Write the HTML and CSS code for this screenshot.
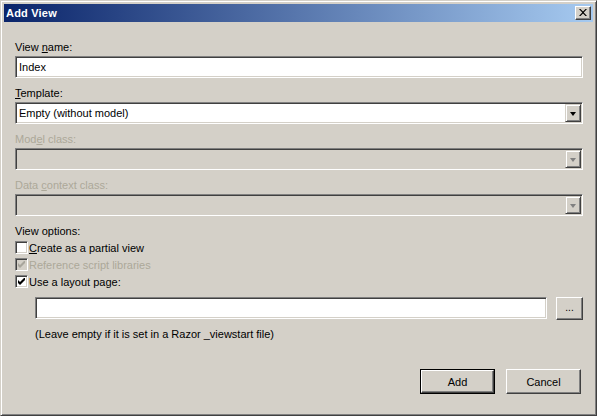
FILE: index.html
```html
<!DOCTYPE html>
<html>
<head>
<meta charset="utf-8">
<title>Add View</title>
<link rel="stylesheet" href="styles.css">
</head>
<body>
<div class="window">
  <div class="titlebar">
    <span class="title">Add View</span>
    <span class="close-btn">
      <svg width="8" height="7" viewBox="0 0 8 7"><path d="M0 0 L1.5 0 L4 2.5 L6.5 0 L8 0 L4.75 3.5 L8 7 L6.5 7 L4 4.5 L1.5 7 L0 7 L3.25 3.5 Z" fill="#000"/></svg>
    </span>
  </div>
  <div class="content">
    <div class="label">View <u>n</u>ame:</div>
    <div class="field"><span class="field-text">Index</span></div>

    <div class="label gap"><u>T</u>emplate:</div>
    <div class="field combo">
      <span class="field-text">Empty (without model)</span>
      <span class="drop-btn"><span class="arrow"></span></span>
    </div>

    <div class="label gap disabled">Mod<u>e</u>l class:</div>
    <div class="field combo is-disabled">
      <span class="field-text"></span>
      <span class="drop-btn"><span class="arrow"></span></span>
    </div>

    <div class="label gap disabled">Data <u>c</u>ontext class:</div>
    <div class="field combo is-disabled">
      <span class="field-text"></span>
      <span class="drop-btn"><span class="arrow"></span></span>
    </div>

    <div class="label gap options-label">View options:</div>
    <div class="check-row">
      <span class="checkbox"></span>
      <span class="check-text"><u>C</u>reate as a partial view</span>
    </div>
    <div class="check-row disabled">
      <span class="checkbox is-disabled">
        <svg width="7" height="7" viewBox="0 0 7 7"><path d="M0 2 L0 5 L2 7 L7 2 L7 -1 L2 4 Z" fill="#a8a59c"/></svg>
      </span>
      <span class="check-text">Reference script libraries</span>
    </div>
    <div class="check-row">
      <span class="checkbox">
        <svg width="7" height="7" viewBox="0 0 7 7"><path d="M0 2 L0 5 L2 7 L7 2 L7 -1 L2 4 Z" fill="#000"/></svg>
      </span>
      <span class="check-text">Use a layout page:</span>
    </div>

    <div class="layout-row">
      <div class="field layout-field"></div>
      <div class="button browse">...</div>
    </div>
    <div class="hint">(Leave empty if it is set in a Razor _viewstart file)</div>

    <div class="button-row">
      <div class="default-frame"><div class="button wide">Add</div></div>
      <div class="button wide">Cancel</div>
    </div>
  </div>
</div>
</body>
</html>
```
FILE: styles.css
```css
* { box-sizing: border-box; }

html, body {
  margin: 0;
  padding: 0;
  background: #ffffff;
}

body {
  font-family: "Liberation Sans", Arial, sans-serif;
  font-size: 11px;
  color: #000;
}

.window {
  width: 597px;
  height: 416px;
  background: #d4d0c8;
  border: 1px solid;
  border-color: #d4d0c8 #404040 #404040 #d4d0c8;
  box-shadow: inset 1px 1px #ffffff, inset -1px -1px #808080;
  padding: 3px 3px 2px 3px;
  display: flex;
  flex-direction: column;
}

.titlebar {
  height: 18px;
  background: linear-gradient(to right, #0a246a, #a6caf0);
  display: flex;
  align-items: center;
  justify-content: space-between;
  padding: 0 2px 0 2px;
}

.title {
  color: #ffffff;
  font-weight: bold;
  font-size: 11px;
  letter-spacing: 0.2px;
}

.close-btn {
  width: 16px;
  height: 14px;
  background: #d4d0c8;
  border: 1px solid;
  border-color: #ffffff #404040 #404040 #ffffff;
  box-shadow: inset -1px -1px #808080;
  display: flex;
  align-items: center;
  justify-content: center;
  padding-bottom: 1px;
}

.content {
  flex: 1;
  padding: 18px 10px 0 11px;
  display: flex;
  flex-direction: column;
}

.label {
  height: 14px;
  line-height: 14px;
  margin-bottom: 2px;
  white-space: nowrap;
}

.label.gap { margin-top: 8px; }
.options-label { margin-bottom: 1px; }

.disabled { color: #aca899; }

.field {
  height: 22px;
  background: #ffffff;
  border: 1px solid;
  border-color: #808080 #ffffff #ffffff #808080;
  box-shadow: inset 1px 1px #404040, inset -1px -1px #d4d0c8;
  display: flex;
  align-items: center;
  padding: 0 2px 0 3px;
}

.field-text {
  flex: 1;
  line-height: 14px;
}

.field.is-disabled { background: #d4d0c8; }

.drop-btn {
  width: 16px;
  height: 18px;
  background: #d4d0c8;
  border: 1px solid;
  border-color: #d4d0c8 #404040 #404040 #d4d0c8;
  box-shadow: inset 1px 1px #ffffff, inset -1px -1px #808080;
  display: flex;
  align-items: center;
  justify-content: center;
  margin-right: -1px;
}

.arrow {
  width: 0;
  height: 0;
  border-left: 3.5px solid transparent;
  border-right: 3.5px solid transparent;
  border-top: 4px solid #000;
  margin-top: 1px;
}

.is-disabled .arrow { border-top-color: #808080; }

.check-row {
  height: 17px;
  display: flex;
  align-items: center;
}

.checkbox {
  width: 13px;
  height: 13px;
  background: #ffffff;
  border: 1px solid;
  border-color: #808080 #ffffff #ffffff #808080;
  box-shadow: inset 1px 1px #404040, inset -1px -1px #d4d0c8;
  display: flex;
  align-items: center;
  justify-content: center;
  margin-right: 1px;
  flex: none;
}

.checkbox.is-disabled { background: #d4d0c8; }

.layout-row {
  margin-top: 7px;
  margin-left: 20px;
  display: flex;
  gap: 9px;
  align-items: flex-start;
}

.layout-field {
  width: 512px;
}

.button {
  background: #d4d0c8;
  border: 1px solid;
  border-color: #ffffff #404040 #404040 #ffffff;
  box-shadow: inset -1px -1px #808080;
  display: flex;
  align-items: center;
  justify-content: center;
}

.browse {
  width: 27px;
  height: 23px;
  font-size: 10px;
  padding-bottom: 2px;
}

.hint {
  margin-top: 7px;
  margin-left: 20px;
  height: 14px;
  line-height: 14px;
}

.button-row {
  margin-top: 28px;
  margin-right: 2px;
  display: flex;
  justify-content: flex-end;
  gap: 11px;
}

.wide {
  width: 75px;
  height: 25px;
}

.default-frame {
  border: 1px solid #000;
}

.default-frame .wide {
  width: 73px;
  height: 23px;
}
```
